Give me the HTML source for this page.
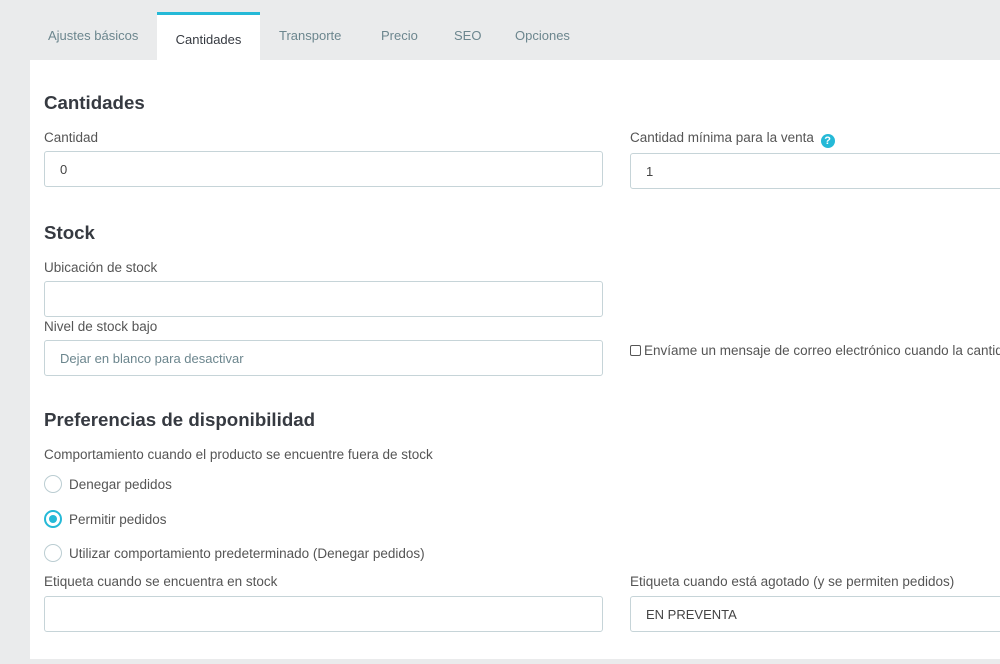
<!DOCTYPE html>
<html><head><meta charset="utf-8"><style>
*{box-sizing:border-box;margin:0;padding:0}
body{width:1000px;height:664px;overflow:hidden;background:#eaebec;font-family:"Liberation Sans",sans-serif;color:#363a41;position:relative}
.tab{position:absolute;top:28px;font-size:13px;color:#6c868e}
.active{position:absolute;left:157px;top:12px;width:103px;height:50px;background:#fff;border-top:3px solid #25b9d7;font-size:13px;color:#363a41;text-align:center;padding-top:17px}
.panel{position:absolute;left:30px;top:60px;width:980px;height:599px;background:#fff}
h2{position:absolute;font-size:18.7px;font-weight:bold;color:#363a41}
.lbl{position:absolute;font-size:13.5px;color:#555;white-space:nowrap}
.in{position:absolute;height:36px;border:1px solid #c6d4d8;border-radius:3px;background:#fff;font-size:13px;color:#444;padding:10px 15px}
.radio{position:absolute;left:44px;width:18px;height:18px;border:1px solid #bbcdd2;border-radius:50%}
.rl{position:absolute;left:69px;font-size:13.5px;color:#555;white-space:nowrap}
</style></head><body>
<div class="tab" style="left:48px">Ajustes básicos</div>
<div class="active">Cantidades</div>
<div class="tab" style="left:279px">Transporte</div>
<div class="tab" style="left:381px">Precio</div>
<div class="tab" style="left:454px">SEO</div>
<div class="tab" style="left:515px">Opciones</div>
<div class="panel"></div>
<h2 style="left:44px;top:92px">Cantidades</h2>
<div class="lbl" style="left:44px;top:130px">Cantidad</div>
<div class="in" style="left:44px;top:151px;width:559px">0</div>
<div class="lbl" style="left:630px;top:130px">Cantidad mínima para la venta <span style="display:inline-block;width:14px;height:14px;border-radius:50%;background:#25b9d7;color:#fff;font-size:11px;font-weight:bold;text-align:center;line-height:14px;vertical-align:-2px;margin-left:3px">?</span></div>
<div class="in" style="left:630px;top:153px;width:380px">1</div>
<h2 style="left:44px;top:222px">Stock</h2>
<div class="lbl" style="left:44px;top:260px">Ubicación de stock</div>
<div class="in" style="left:44px;top:281px;width:559px"></div>
<div class="lbl" style="left:44px;top:319px">Nivel de stock bajo</div>
<div class="in" style="left:44px;top:340px;width:559px;color:#6c868e">Dejar en blanco para desactivar</div>
<div class="lbl" style="left:630px;top:343px"><span style="display:inline-block;width:11px;height:11px;border:1px solid #555;border-radius:2px;vertical-align:-1px;margin-right:3px"></span>Envíame un mensaje de correo electrónico cuando la cantidad</div>
<h2 style="left:44px;top:409px">Preferencias de disponibilidad</h2>
<div class="lbl" style="left:44px;top:447px">Comportamiento cuando el producto se encuentre fuera de stock</div>
<div class="radio" style="top:475px"></div><div class="rl" style="top:477px">Denegar pedidos</div>
<div class="radio" style="top:510px;border:2px solid #25b9d7"><div style="position:absolute;left:3px;top:3px;width:8px;height:8px;border-radius:50%;background:#25b9d7"></div></div><div class="rl" style="top:512px">Permitir pedidos</div>
<div class="radio" style="top:544px"></div><div class="rl" style="top:546px">Utilizar comportamiento predeterminado (Denegar pedidos)</div>
<div class="lbl" style="left:44px;top:574px">Etiqueta cuando se encuentra en stock</div>
<div class="in" style="left:44px;top:596px;width:559px"></div>
<div class="lbl" style="left:630px;top:574px">Etiqueta cuando está agotado (y se permiten pedidos)</div>
<div class="in" style="left:630px;top:596px;width:380px">EN PREVENTA</div>
</body></html>
